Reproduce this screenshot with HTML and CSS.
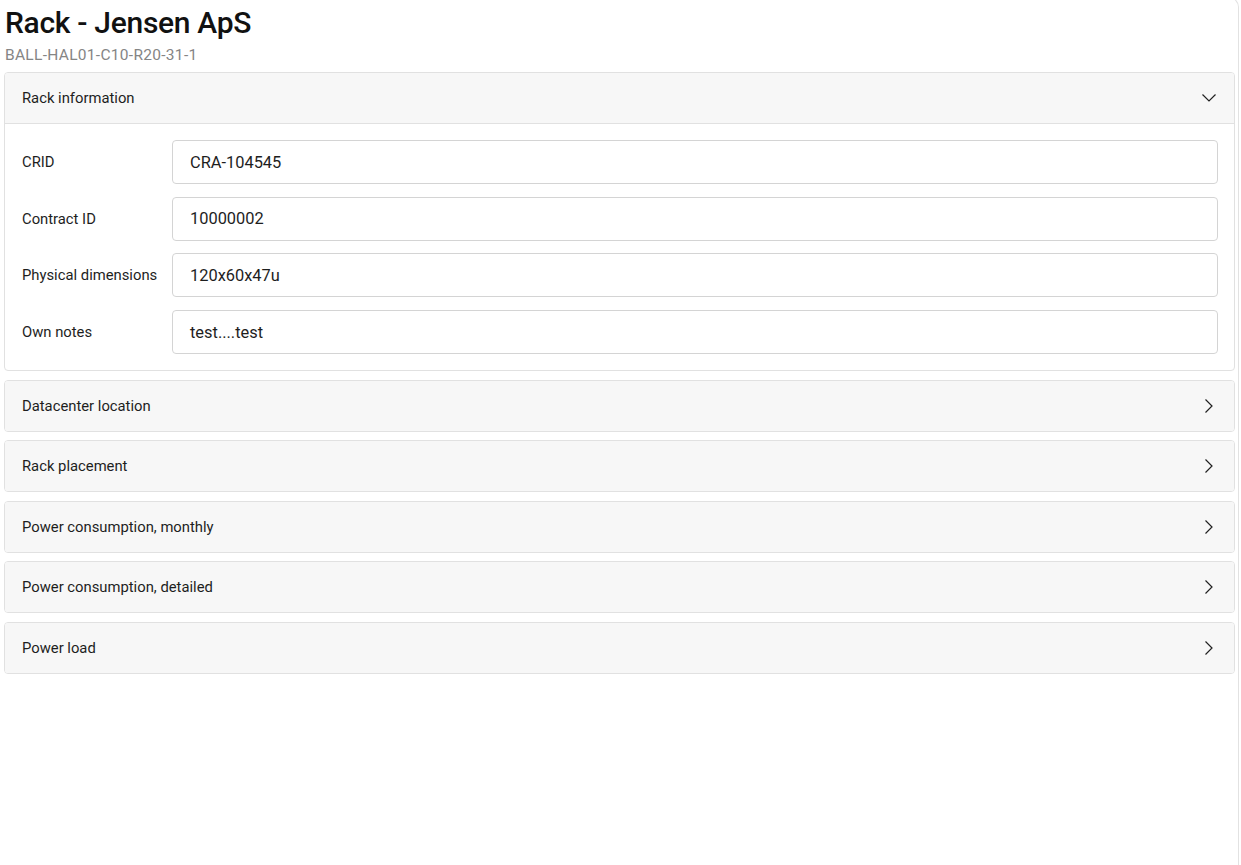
FILE: index.html
```html
<!DOCTYPE html>
<html>
<head>
<meta charset="utf-8">
<link rel="stylesheet" href="styles.css">
</head>
<body>
<div class="page">
  <header class="head">
    <h1 class="title">Rack - Jensen ApS</h1>
    <div class="subtitle">BALL-HAL01-C10-R20-31-1</div>
  </header>

  <section class="panel open">
    <div class="panel-head">
      <span>Rack information</span>
      <svg class="chev" width="16" height="16" viewBox="0 0 16 16"><path d="M1.5 4.5 L8 11 L14.5 4.5" fill="none" stroke="#222" stroke-width="1.2"/></svg>
    </div>
    <div class="panel-body">
      <div class="row"><label>CRID</label><div class="input">CRA-104545</div></div>
      <div class="row"><label>Contract ID</label><div class="input">10000002</div></div>
      <div class="row"><label>Physical dimensions</label><div class="input">120x60x47u</div></div>
      <div class="row"><label>Own notes</label><div class="input">test....test</div></div>
    </div>
  </section>

  <section class="panel">
    <div class="panel-head"><span>Datacenter location</span>
      <svg class="chev" width="16" height="16" viewBox="0 0 16 16"><path d="M4.5 1.5 L11 8 L4.5 14.5" fill="none" stroke="#222" stroke-width="1.2"/></svg></div>
  </section>
  <section class="panel">
    <div class="panel-head"><span>Rack placement</span>
      <svg class="chev" width="16" height="16" viewBox="0 0 16 16"><path d="M4.5 1.5 L11 8 L4.5 14.5" fill="none" stroke="#222" stroke-width="1.2"/></svg></div>
  </section>
  <section class="panel">
    <div class="panel-head"><span>Power consumption, monthly</span>
      <svg class="chev" width="16" height="16" viewBox="0 0 16 16"><path d="M4.5 1.5 L11 8 L4.5 14.5" fill="none" stroke="#222" stroke-width="1.2"/></svg></div>
  </section>
  <section class="panel">
    <div class="panel-head"><span>Power consumption, detailed</span>
      <svg class="chev" width="16" height="16" viewBox="0 0 16 16"><path d="M4.5 1.5 L11 8 L4.5 14.5" fill="none" stroke="#222" stroke-width="1.2"/></svg></div>
  </section>
  <section class="panel">
    <div class="panel-head"><span>Power load</span>
      <svg class="chev" width="16" height="16" viewBox="0 0 16 16"><path d="M4.5 1.5 L11 8 L4.5 14.5" fill="none" stroke="#222" stroke-width="1.2"/></svg></div>
  </section>
</div>
</body>
</html>
```

FILE: styles.css
```css
html, body {
  margin: 0;
  padding: 0;
  background: #fff;
}
body {
  font-family: Roboto, "Liberation Sans", sans-serif;
  color: #1e1e1e;
  overflow: hidden;
}
.page {
  box-sizing: border-box;
  width: 1239px;
  min-height: 870px;
  margin-top: -3px;
  padding: 5px 3px 0 4px;
  border: 1px solid #e2e2e2;
  border-left: none;
  border-top-right-radius: 10px;
  display: flex;
  flex-direction: column;
  gap: 8.5px;
}
.head {
  padding-left: 1px;
  margin-bottom: -1.5px;
}
.title {
  margin: 0;
  font-size: 30px;
  font-weight: 500;
  line-height: 40px;
  letter-spacing: -0.3px;
  color: #111;
}
.subtitle {
  font-size: 15.5px;
  letter-spacing: 0.3px;
  line-height: 20px;
  color: #858585;
  margin-top: 2px;
}
.panel {
  border: 1px solid #e1e1e1;
  border-radius: 4px;
  background: #fff;
  overflow: hidden;
}
.panel-head {
  height: 50px;
  box-sizing: border-box;
  background: #f7f7f7;
  display: flex;
  align-items: center;
  justify-content: space-between;
  padding: 0 17px 0 17px;
  font-size: 14.8px;
  color: #1e1e1e;
}
.panel.open .panel-head {
  border-bottom: 1px solid #e1e1e1;
  height: 51px;
}
.chev {
  display: block;
}
.panel-body {
  padding: 16px 16px 16px 17px;
  display: flex;
  flex-direction: column;
  gap: 12.7px;
}
.row {
  display: flex;
  align-items: center;
}
.row label {
  width: 150px;
  font-size: 14.8px;
  color: #1e1e1e;
}
.input {
  flex: 1;
  height: 44px;
  box-sizing: border-box;
  border: 1px solid #d4d4d4;
  border-radius: 4px;
  display: flex;
  align-items: center;
  padding-left: 17px;
  font-size: 16.4px;
  color: #1e1e1e;
}
```
